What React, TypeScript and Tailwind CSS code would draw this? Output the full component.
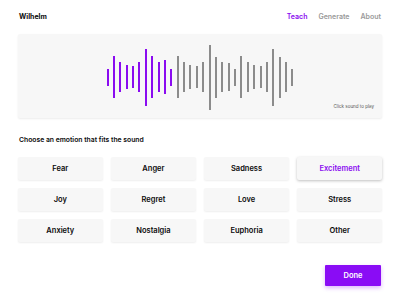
const purple = [17, 42, 30, 24, 22, 30, 57, 42, 30, 34, 17]
const gray = [42, 30, 24, 22, 30, 65, 41, 30, 28, 17, 42, 30, 24, 22, 30, 57, 41, 30, 17]

const emotions = [
    "Fear", "Anger", "Sadness", "Excitement",
    "Joy", "Regret", "Love", "Stress",
    "Anxiety", "Nostalgia", "Euphoria", "Other",
]

const App = () => {
    return (
        <div className="w-[400px] h-[300px] bg-white px-[18px] font-['Inter',sans-serif] text-[#0a0a0a]">
            <div className="h-[34px] flex items-center justify-between pl-[1px]">
                <div className="text-[7px] font-bold">Wilhelm</div>
                <div className="flex gap-[11px] text-[7px] font-semibold pr-[1px]">
                    <span className="text-[#8a0cf0]">Teach</span>
                    <span className="text-[#9a9a9a]">Generate</span>
                    <span className="text-[#9a9a9a]">About</span>
                </div>
            </div>

            <div className="relative h-[84px] bg-[#f7f7f7] rounded-[2px] shadow-[0_1px_2px_rgba(0,0,0,0.08)] flex items-center justify-center">
                <div className="flex items-center gap-[4.38px] pt-[2px]">
                    {purple.map((h, i) => (
                        <div key={"p" + i} className="w-[2px] bg-[#8a0cf0]" style={{ height: h }} />
                    ))}
                    {gray.map((h, i) => (
                        <div key={"g" + i} className="w-[2px] bg-[#8c8c8c]" style={{ height: h }} />
                    ))}
                </div>
                <div className="absolute right-[8px] bottom-[7px] text-[4.5px] text-[#555]">Click sound to play</div>
            </div>

            <div className="mt-[17px] text-[6.8px] font-semibold pl-[1px]">Choose an emotion that fits the sound</div>

            <div className="mt-[12px] grid grid-cols-4 gap-x-[8.5px] gap-y-[8px]">
                {emotions.map((e) => (
                    <div
                        key={e}
                        className={
                            e === "Excitement"
                                ? "h-[23px] flex items-center justify-center bg-[#f7f7f7] rounded-[2px] shadow-[0_1px_3px_rgba(0,0,0,0.25)] text-[7.5px] font-semibold text-[#8a0cf0]"
                                : "h-[23px] flex items-center justify-center bg-[#f7f7f7] rounded-[2px] shadow-[0_1px_2px_rgba(0,0,0,0.07)] text-[7.5px] font-semibold"
                        }
                    >
                        {e}
                    </div>
                ))}
            </div>

            <div className="mt-[23px] flex justify-end pr-[1px]">
                <button className="w-[56px] h-[21px] bg-[#8a0cf5] text-white text-[7.5px] font-semibold rounded-[1px] shadow-[0_2px_4px_rgba(138,12,245,0.3)]">
                    Done
                </button>
            </div>
        </div>
    )
}

export default App
